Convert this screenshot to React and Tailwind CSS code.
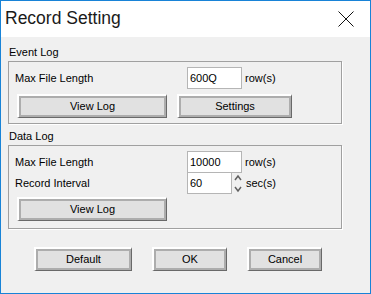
const font = { fontFamily: '"Liberation Sans", Arial, sans-serif' };

// Win32-style push button
const Btn = ({ label, className }) => (
  <div
    className={`h-[24px] border-t-2 border-l-2 border-t-white border-l-white border-r border-b border-r-[#696969] border-b-[#696969] flex ${className}`}
  >
    <div className="flex-1 border-2 border-[#adadad] bg-[#e1e1e1] flex items-center justify-center text-[11px] text-black">
      {label}
    </div>
  </div>
);

const Field = ({ value, className }) => (
  <div className={`h-[22px] bg-white border border-[#b5b5b5] flex items-center pl-[2px] text-[11px] text-black ${className}`}>
    {value}
  </div>
);

const Spin = () => (
  <svg width="10" height="20" viewBox="0 0 10 20" className="ml-[1px]">
    <path d="M2 7 L5 3 L8 7" fill="none" stroke="#606060" strokeWidth="1.5" />
    <path d="M2 14 L5 18 L8 14" fill="none" stroke="#606060" strokeWidth="1.5" />
  </svg>
);

const App = () => {
  return (
    // Dialog window
    <div className="w-[371px] h-[294px] border border-[#1883d7] flex flex-col bg-[#f0f0f0]" style={font}>

      {/* Title bar */}
      <div className="h-[36px] bg-white flex items-center justify-between pl-[4px] pr-[16px] shrink-0">
        <span className="text-[17.5px] text-[#1a1a1a] leading-none">Record Setting</span>
        <svg width="16" height="16" viewBox="0 0 16 16">
          <path d="M0.5 0.5 L15.5 15.5 M15.5 0.5 L0.5 15.5" stroke="#111" strokeWidth="1" />
        </svg>
      </div>

      {/* Body */}
      <div className="flex-1 flex flex-col pt-[9px] text-[11px] text-black">

        {/* Event Log */}
        <div className="ml-[8px] h-[13px] leading-[13px]">Event Log</div>
        <div className="ml-[7px] mt-[2px] w-[334px] border border-[#a0a0a0] shadow-[1px_1px_0_#fff] pt-[5px] pb-[5px]">
          <div className="flex items-center h-[22px] pl-[6px]">
            <span className="w-[172px]">Max File Length</span>
            <Field value="600Q" className="w-[55px]" />
            <span className="ml-[3px]">row(s)</span>
          </div>
          <div className="flex mt-[5px] pl-[8px] gap-[10px]">
            <Btn label="View Log" className="w-[150px]" />
            <Btn label="Settings" className="w-[115px]" />
          </div>
        </div>

        {/* Data Log */}
        <div className="ml-[8px] mt-[6px] h-[13px] leading-[13px]">Data Log</div>
        <div className="ml-[7px] mt-[2px] w-[334px] border border-[#a0a0a0] shadow-[1px_1px_0_#fff] pt-[5px] pb-[7px]">
          <div className="flex items-center h-[22px] pl-[6px]">
            <span className="w-[172px]">Max File Length</span>
            <Field value="10000" className="w-[55px]" />
            <span className="ml-[3px]">row(s)</span>
          </div>
          <div className="flex items-center h-[22px] -mt-[1px] pl-[6px]">
            <span className="w-[172px]">Record Interval</span>
            <Field value="60" className="w-[45px]" />
            <Spin />
            <span className="ml-[3px]">sec(s)</span>
          </div>
          <div className="flex mt-[3px] pl-[8px]">
            <Btn label="View Log" className="w-[150px]" />
          </div>
        </div>

        {/* Dialog buttons */}
        <div className="flex mt-[18px] ml-[33px] gap-[20px]">
          <Btn label="Default" className="w-[98px]" />
          <Btn label="OK" className="w-[75px]" />
          <Btn label="Cancel" className="w-[75px]" />
        </div>
      </div>
    </div>
  );
};

export default App;
